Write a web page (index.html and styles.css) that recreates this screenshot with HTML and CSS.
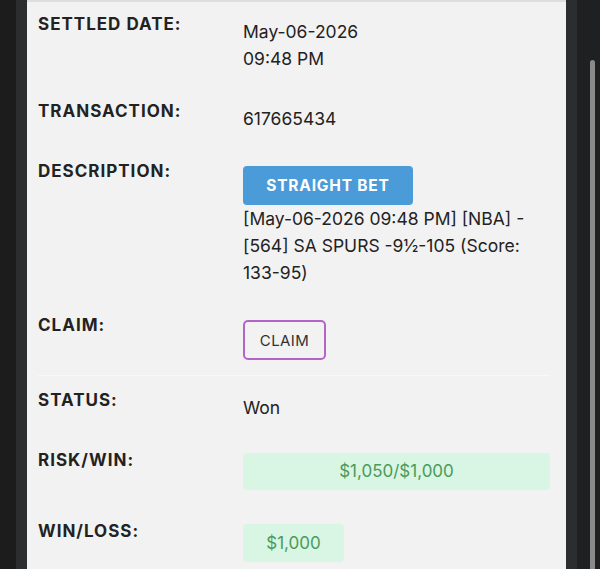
FILE: index.html
```html
<!DOCTYPE html>
<html lang="en">

<head>
    <meta charset="UTF-8">
    <meta name="viewport" content="width=device-width, initial-scale=1.0">
    <title>Bet Details</title>
    <link rel="stylesheet" href="styles.css">
</head>

<body>
    <div class="frame">
        <div class="gutter-left"></div>
        <div class="edge"></div>

        <div class="panel">
            <div class="row row-first">
                <div class="label">SETTLED DATE:</div>
                <div class="value">May-06-2026<br>09:48 PM</div>
            </div>
            <div class="row">
                <div class="label">TRANSACTION:</div>
                <div class="value">617665434</div>
            </div>
            <div class="row">
                <div class="label">DESCRIPTION:</div>
                <div class="value value-block">
                    <span class="bet-type">STRAIGHT BET</span>
                    <div class="desc">[May-06-2026 09:48 PM] [NBA] - [564] SA SPURS -9½-105 (Score: 133-95)</div>
                </div>
            </div>
            <div class="row row-divided">
                <div class="label">CLAIM:</div>
                <div class="value value-block">
                    <button class="claim-button">CLAIM</button>
                </div>
            </div>
            <div class="row">
                <div class="label">STATUS:</div>
                <div class="value">Won</div>
            </div>
            <div class="row">
                <div class="label">RISK/WIN:</div>
                <div class="value value-money">
                    <div class="amount amount-wide">$1,050/$1,000</div>
                </div>
            </div>
            <div class="row">
                <div class="label">WIN/LOSS:</div>
                <div class="value value-money">
                    <div class="amount">$1,000</div>
                </div>
            </div>
        </div>

        <div class="edge"></div>
        <div class="gutter-right">
            <div class="scroll-thumb"></div>
        </div>
    </div>
</body>

</html>
```

FILE: styles.css
```css
html,
body {
    margin: 0;
    height: 100%;
    background-color: #1c1c1c;
    font-family: Inter, "Noto Sans", sans-serif;
    color: #222;
}

.frame {
    display: flex;
    height: 569px;
    overflow: hidden;
}

.gutter-left {
    width: 16px;
    background-color: #1c1c1c;
}

.edge {
    width: 11px;
    background-color: #2b2d2f;
}

.gutter-right {
    width: 23px;
    background-color: #1f2021;
}

.scroll-thumb {
    width: 5px;
    height: 520px;
    margin: 60px 0 0 13px;
    border-radius: 3px;
    background-color: #8a8a8a;
}

.panel {
    width: 512px;
    flex: none;
    background-color: #f2f2f2;
    border-top: 2px solid #dedede;
    padding: 0 16px 0 11px;
}

.row {
    display: grid;
    grid-template-columns: 205px 1fr;
    padding: 14px 0 15px;
}

.row-first {
    padding-top: 12px;
}

.row-divided {
    border-bottom: 1px solid #f8f8f8;
}

.label {
    font-size: 17px;
    line-height: 20px;
    font-weight: 700;
    letter-spacing: 1px;
    color: #222;
}

.value {
    font-size: 17.5px;
    line-height: 27px;
    margin-top: 4px;
    color: #222;
}

.value-block {
    margin-top: 5px;
}

.value-money {
    margin-top: 3px;
}

.bet-type {
    display: inline-block;
    width: 170px;
    height: 39px;
    line-height: 39px;
    text-align: center;
    background-color: #4b9bd9;
    color: #fff;
    font-size: 15.5px;
    font-weight: 700;
    letter-spacing: 0.8px;
    border-radius: 4px;
}

.desc {
    line-height: 27px;
}

.claim-button {
    width: 83px;
    height: 40px;
    background: transparent;
    border: 2px solid #b464c9;
    border-radius: 5px;
    font-family: inherit;
    font-size: 15px;
    color: #333;
    letter-spacing: 0.4px;
    padding: 0;
}

.amount {
    display: inline-block;
    width: 101px;
    height: 38px;
    line-height: 38px;
    text-align: center;
    background-color: #d8f6e3;
    color: #4c9a5b;
    font-size: 17px;
    border-radius: 4px;
}

.amount-wide {
    display: block;
    width: auto;
    height: 37px;
    line-height: 37px;
    margin-bottom: 2px;
}
```
